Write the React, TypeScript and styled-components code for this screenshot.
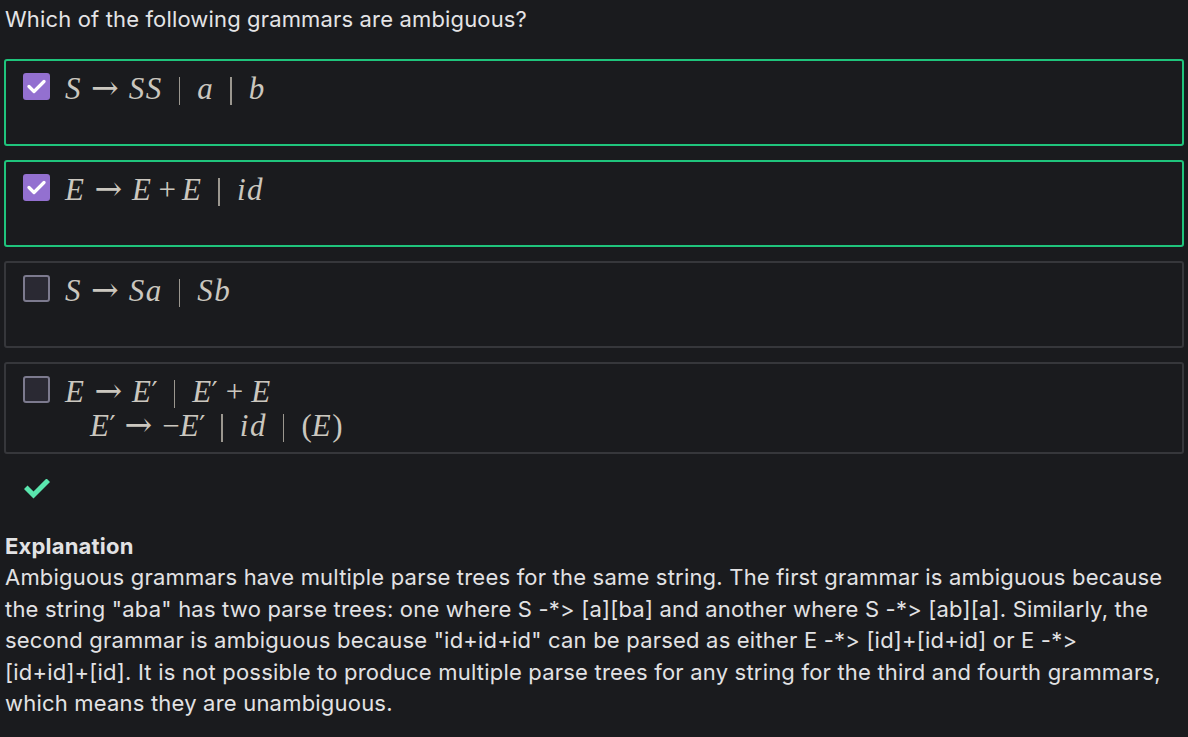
import React from 'react';
import styled, { createGlobalStyle } from 'styled-components';

const GlobalStyle = createGlobalStyle`
  html, body {
    margin: 0;
    padding: 0;
    background-color: #1a1b1e;
  }
  body {
    font-family: Inter, "Noto Sans", sans-serif;
    color: #e4e4e6;
  }
`;

const Page = styled.div`
  padding: 4px 4px 0 4px;
  display: flex;
  flex-direction: column;
`;

const Question = styled.div`
  font-size: 22px;
  line-height: 30px;
  letter-spacing: 0.15px;
  padding-left: 1px;
  margin-bottom: 25px;
`;

const Options = styled.div`
  display: flex;
  flex-direction: column;
  gap: 14px;
`;

const Card = styled.label<{ $correct?: boolean }>`
  box-sizing: border-box;
  min-height: 87px;
  display: flex;
  align-items: flex-start;
  gap: 15px;
  padding: 11px 17px;
  border: 2px solid ${(p) => (p.$correct ? '#1fc47c' : '#36373b')};
  border-radius: 3px;
  cursor: pointer;
`;

const Box = styled.span<{ $checked?: boolean }>`
  box-sizing: border-box;
  flex: none;
  width: 27px;
  height: 27px;
  margin-top: 1px;
  border-radius: 3px;
  display: flex;
  align-items: center;
  justify-content: center;
  background-color: ${(p) => (p.$checked ? '#9370d0' : '#2a2933')};
  border: 2px solid ${(p) => (p.$checked ? '#9370d0' : '#7c7a8e')};
`;

const Math = styled.div`
  font-family: "Liberation Serif", "DejaVu Serif", serif;
  font-size: 31px;
  color: #cbc7bf;
  display: flex;
  flex-direction: column;
  gap: 2px;
`;

const MathLine = styled.div<{ $indent?: number }>`
  height: 32px;
  line-height: 32px;
  white-space: nowrap;
  padding-left: ${(p) => p.$indent ?? 0}px;
`;

const V = styled.i`
  font-style: italic;
  letter-spacing: 1.5px;
`;

const Op = styled.span<{ $space?: number }>`
  font-style: normal;
  margin: 0 ${(p) => p.$space ?? 10}px;
`;

const ArrowGlyph = styled.span`
  font-family: "DejaVu Serif", serif;
  font-size: 33px;
  margin: 0 10px 0 9px;
`;

const Bar = styled.span`
  display: inline-block;
  width: 1.5px;
  height: 28px;
  background-color: #9b978f;
  vertical-align: -6px;
  margin: 0 17px 0 16px;
`;

const Prime = styled.span`
  font-family: "DejaVu Serif", serif;
  font-style: normal;
  font-size: 27px;
  line-height: 0;
  margin-left: -1px;
`;

const Result = styled.div`
  padding: 25px 0 0 20px;
  height: 40px;
`;

const Explanation = styled.div`
  padding: 12px 1px 0 1px;
  font-size: 22px;
  line-height: 31.4px;
  letter-spacing: 0.2px;
  color: #e2e2e4;
`;

const Title = styled.div`
  font-weight: 700;
`;

const NoWrap = styled.span`
  white-space: nowrap;
`;

const Tick = () => (
  <svg width="19" height="15" viewBox="0 0 19 15">
    <path d="M2 7.5 L7 12.5 L17 2.5" fill="none" stroke="#ffffff" strokeWidth="3.2" strokeLinecap="round" strokeLinejoin="round" />
  </svg>
);

const BigTick = () => (
  <svg width="26" height="20" viewBox="0 0 26 20">
    <path d="M3.5 10 L9.5 16 L22.5 3" fill="none" stroke="#5ae6ae" strokeWidth="5" strokeLinecap="square" strokeLinejoin="miter" />
  </svg>
);

const Arrow = () => <ArrowGlyph>→</ArrowGlyph>;

const App: React.FC = () => {
  return (
    <>
      <GlobalStyle />
      <Page>
        <Question>Which of the following grammars are ambiguous?</Question>
        <Options>
          <Card $correct>
            <Box $checked><Tick /></Box>
            <Math>
              <MathLine>
                <V>S</V><Arrow /><V>SS</V><Bar /><V>a</V><Bar /><V>b</V>
              </MathLine>
            </Math>
          </Card>
          <Card $correct>
            <Box $checked><Tick /></Box>
            <Math>
              <MathLine>
                <V>E</V><Arrow /><V>E</V><Op $space={6}>+</Op><V>E</V><Bar /><V>id</V>
              </MathLine>
            </Math>
          </Card>
          <Card>
            <Box />
            <Math>
              <MathLine>
                <V>S</V><Arrow /><V>Sa</V><Bar /><V>Sb</V>
              </MathLine>
            </Math>
          </Card>
          <Card>
            <Box />
            <Math>
              <MathLine>
                <V>E</V><Arrow /><V>E</V><Prime>′</Prime><Bar /><V>E</V><Prime>′</Prime><Op $space={8}>+</Op><V>E</V>
              </MathLine>
              <MathLine $indent={25}>
                <V>E</V><Prime>′</Prime><Arrow /><Op $space={0}>−</Op><V>E</V><Prime>′</Prime><Bar /><V>id</V><Bar /><Op $space={0}>(</Op><V>E</V><Op $space={0}>)</Op>
              </MathLine>
            </Math>
          </Card>
        </Options>
        <Result><BigTick /></Result>
        <Explanation>
          <Title>Explanation</Title>
          Ambiguous grammars have multiple parse trees for the same string. The first grammar is ambiguous because the string "aba" has two parse trees: one where S -*&gt; [a][ba] and another where S -*&gt; [ab][a]. Similarly, the second grammar is ambiguous because "id+id+id" can be parsed as either E -*&gt; [id]+[id+id] or E -*&gt; <NoWrap>[id+id]+[id].</NoWrap> It is not possible to produce multiple parse trees for any string for the third and fourth grammars, which means they are unambiguous.
        </Explanation>
      </Page>
    </>
  );
};

export default App;
